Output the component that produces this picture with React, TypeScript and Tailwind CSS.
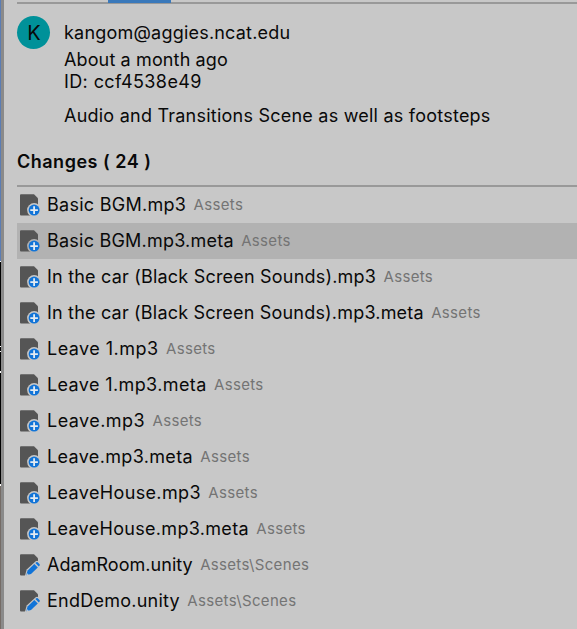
type Status = "added" | "modified";

interface Change {
  name: string;
  path: string;
  status: Status;
  tracking: string;
  selected?: boolean;
}

const changes: Change[] = [
  { name: "Basic BGM.mp3", path: "Assets", status: "added", tracking: "tracking-[0.27px]" },
  { name: "Basic BGM.mp3.meta", path: "Assets", status: "added", tracking: "tracking-[0.22px]", selected: true },
  { name: "In the car (Black Screen Sounds).mp3", path: "Assets", status: "added", tracking: "tracking-[0.2px]" },
  { name: "In the car (Black Screen Sounds).mp3.meta", path: "Assets", status: "added", tracking: "tracking-[0.19px]" },
  { name: "Leave 1.mp3", path: "Assets", status: "added", tracking: "tracking-[0.47px]" },
  { name: "Leave 1.mp3.meta", path: "Assets", status: "added", tracking: "tracking-[0.38px]" },
  { name: "Leave.mp3", path: "Assets", status: "added", tracking: "tracking-[0.45px]" },
  { name: "Leave.mp3.meta", path: "Assets", status: "added", tracking: "tracking-[0.34px]" },
  { name: "LeaveHouse.mp3", path: "Assets", status: "added", tracking: "tracking-[0.36px]" },
  { name: "LeaveHouse.mp3.meta", path: "Assets", status: "added", tracking: "tracking-[0.31px]" },
  { name: "AdamRoom.unity", path: "Assets\\Scenes", status: "modified", tracking: "tracking-[0.04px]" },
  { name: "EndDemo.unity", path: "Assets\\Scenes", status: "modified", tracking: "tracking-[0.25px]" },
];

function FileIcon({ status, selected }: { status: Status; selected?: boolean }) {
  const halo = selected ? "#b2b2b2" : "#c8c8c8";
  return (
    <svg className="ml-[3px] mt-[2px] h-6 w-6 shrink-0" viewBox="0 0 24 24">
      <path d="M1 0.2H14L18 4.2V20.5Q18 21.5 17 21.5H1Q0 21.5 0 20.5V1.2Q0 0.2 1 0.2Z" fill="#555555" />
      {status === "added" ? (
        <>
          <circle cx="14.1" cy="16.1" r="7" fill={halo} />
          <circle cx="14.1" cy="16.1" r="5.5" fill="#1174d8" />
          <path d="M14.1 12.3V19.9M10.3 16.1H17.9" stroke="#e4ebf2" strokeWidth="1.8" />
        </>
      ) : (
        <>
          <path d="M4.7 22.5L6.7 15.6L15.7 7.2Q17 6.2 18.3 7.2L21.3 10.1V22.5Z" fill={halo} />
          <path d="M6.1 21.3L7.6 16.5L14.3 10.1L17.8 13.5L11 20.1Z" fill="#1174d8" />
          <path d="M15.4 9.1L16.3 8.3Q17 7.7 17.7 8.3L19.6 10.2Q20.2 10.9 19.6 11.6L18.8 12.5Z" fill="#1174d8" />
          <path d="M6.2 21.3L6.9 18.9L8.7 20.7Z" fill="#b8c6d5" />
        </>
      )}
    </svg>
  );
}

function ChangeRow({ change }: { change: Change }) {
  return (
    <li className={`flex h-9 items-center whitespace-pre ${change.selected ? "bg-[#b2b2b2]" : ""}`}>
      <FileIcon status={change.status} selected={change.selected} />
      <span className={`ml-[3px] text-[18px] leading-9 ${change.tracking}`}>{change.name}</span>
      <span className="ml-[7.4px] text-[15px] leading-9 tracking-[0.33px] text-[#747474]">{change.path}</span>
    </li>
  );
}

export default function App() {
  return (
    <div className="flex h-[629px] w-[577px] overflow-hidden bg-[#c8c8c8] font-['Inter','Liberation_Sans',sans-serif] text-[18px] text-[#090909]">
      <div className="flex w-px shrink-0 flex-col">
        <div className="h-[261px] bg-[#5b7db4]" />
        <div className="h-px bg-white" />
        <div className="h-[84px] bg-black" />
        <div className="h-px bg-white" />
        <div className="h-[4px] bg-black" />
        <div className="h-px bg-white" />
        <div className="h-[19px] bg-black" />
        <div className="h-[2px] bg-white" />
        <div className="h-[111px] bg-black" />
        <div className="h-[2px] bg-white" />
        <div className="flex-1 bg-[#756c66]" />
      </div>
      <div className="w-[3px] shrink-0 bg-[#8a8a8a]" />
      <main className="min-w-0 flex-1 pl-[13px]">
        <div className="h-1 border-b-2 border-[#999999]">
          <div className="ml-[91px] h-[3px] w-[63px] bg-[#3a79bb]" />
        </div>
        <header className="flex pt-3">
          <div className="flex h-[33px] w-[33px] items-center justify-center rounded-full bg-[#009199] pl-px text-[20px]">K</div>
          <div className="ml-[14px] whitespace-nowrap leading-[22px]">
            <p className="pt-[6px] tracking-[0.21px]">kangom@aggies.ncat.edu</p>
            <p className="mt-[5px] tracking-[0.13px]">About a month ago</p>
            <p className="tracking-[0.4px]">ID: ccf4538e49</p>
            <p className="mt-3 tracking-[0.23px]">Audio and Transitions Scene as well as footsteps</p>
          </div>
        </header>
        <h1 className="mt-[22px] h-[38px] border-b-2 border-[#999999] pt-[2px] font-semibold leading-[22px] tracking-[0.5px]">Changes ( 24 )</h1>
        <ul>
          {changes.map((change) => (
            <ChangeRow key={change.name} change={change} />
          ))}
        </ul>
      </main>
    </div>
  );
}
